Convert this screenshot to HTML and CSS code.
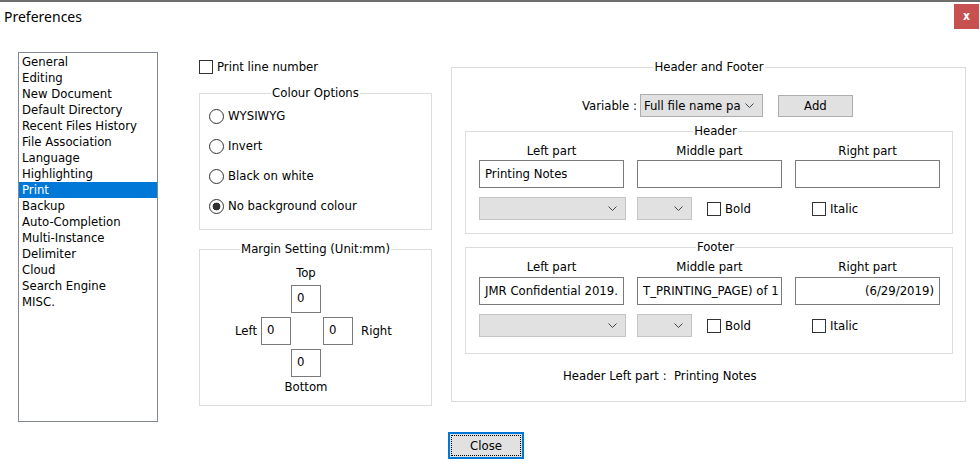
FILE: index.html
```html
<!DOCTYPE html>
<html lang="en">
<head>
<meta charset="utf-8">
<title>Preferences</title>
<link rel="stylesheet" href="styles.css">
</head>
<body>
<div class="topline"></div>
<div class="titlebar">
  <span class="title">Preferences</span>
  <span class="closex">x</span>
</div>
<div class="main">
  <ul class="catlist">
    <li>General</li>
    <li>Editing</li>
    <li>New Document</li>
    <li>Default Directory</li>
    <li>Recent Files History</li>
    <li>File Association</li>
    <li>Language</li>
    <li>Highlighting</li>
    <li class="sel">Print</li>
    <li>Backup</li>
    <li>Auto-Completion</li>
    <li>Multi-Instance</li>
    <li>Delimiter</li>
    <li>Cloud</li>
    <li>Search Engine</li>
    <li>MISC.</li>
  </ul>
  <div class="midcol">
    <label class="chk"><span class="cbox"></span>Print line number</label>
    <fieldset class="grp colour">
      <legend>Colour Options</legend>
      <div class="radios">
        <label class="radio"><span class="rdot"></span>WYSIWYG</label>
        <label class="radio"><span class="rdot"></span>Invert</label>
        <label class="radio"><span class="rdot"></span>Black on white</label>
        <label class="radio"><span class="rdot on"></span>No background colour</label>
      </div>
    </fieldset>
    <fieldset class="grp margins">
      <legend>Margin Setting (Unit:mm)</legend>
      <div class="mgrid">
        <span class="mlabel mtoplabel">Top</span>
        <span class="mbox mtop">0</span>
        <span class="side sleft">Left</span>
        <span class="mbox mleft">0</span>
        <span class="mbox mright">0</span>
        <span class="side sright">Right</span>
        <span class="mbox mbottom">0</span>
        <span class="mlabel mbottomlabel">Bottom</span>
      </div>
    </fieldset>
  </div>
  <fieldset class="grp hf">
    <legend>Header and Footer</legend>
    <div class="varrow">
      <span class="varlabel">Variable :</span>
      <span class="select varsel"><span class="seltext">Full file name pa</span><svg class="chev" width="9" height="5" viewBox="0 0 9 5"><polyline points="0.5,0.5 4.5,4.5 8.5,0.5" fill="none" stroke="#444" stroke-width="1"/></svg></span>
      <span class="btn addbtn">Add</span>
    </div>
    <fieldset class="grp sub headerbox">
      <legend>Header</legend>
      <div class="parts">
        <span class="plabel">Left part</span>
        <span class="plabel">Middle part</span>
        <span class="plabel">Right part</span>
        <span class="pinput">Printing Notes</span>
        <span class="pinput"></span>
        <span class="pinput"></span>
      </div>
      <div class="fontrow">
        <span class="select fontsel"><svg class="chev" width="9" height="5" viewBox="0 0 9 5"><polyline points="0.5,0.5 4.5,4.5 8.5,0.5" fill="none" stroke="#444" stroke-width="1"/></svg></span>
        <span class="select sizesel"><svg class="chev" width="9" height="5" viewBox="0 0 9 5"><polyline points="0.5,0.5 4.5,4.5 8.5,0.5" fill="none" stroke="#444" stroke-width="1"/></svg></span>
        <label class="chk bold"><span class="cbox"></span>Bold</label>
        <label class="chk"><span class="cbox"></span>Italic</label>
      </div>
    </fieldset>
    <fieldset class="grp sub footerbox">
      <legend>Footer</legend>
      <div class="parts">
        <span class="plabel">Left part</span>
        <span class="plabel">Middle part</span>
        <span class="plabel">Right part</span>
        <span class="pinput">JMR Confidential 2019.</span>
        <span class="pinput">T_PRINTING_PAGE) of 1</span>
        <span class="pinput alignright">(6/29/2019)</span>
      </div>
      <div class="fontrow">
        <span class="select fontsel"><svg class="chev" width="9" height="5" viewBox="0 0 9 5"><polyline points="0.5,0.5 4.5,4.5 8.5,0.5" fill="none" stroke="#444" stroke-width="1"/></svg></span>
        <span class="select sizesel"><svg class="chev" width="9" height="5" viewBox="0 0 9 5"><polyline points="0.5,0.5 4.5,4.5 8.5,0.5" fill="none" stroke="#444" stroke-width="1"/></svg></span>
        <label class="chk bold"><span class="cbox"></span>Bold</label>
        <label class="chk"><span class="cbox"></span>Italic</label>
      </div>
    </fieldset>
    <div class="preview">Header Left part :  Printing Notes</div>
  </fieldset>
</div>
<div class="bottombar">
  <button class="closebtn"><span class="focus">Close</span></button>
</div>
</body>
</html>
```
FILE: styles.css
```css
* { box-sizing: border-box; }
html, body { margin: 0; padding: 0; background: #fff; }
body {
  width: 980px;
  height: 472px;
  overflow: hidden;
  font-family: "DejaVu Sans Condensed", "DejaVu Sans", sans-serif;
  font-stretch: condensed;
  font-size: 13px;
  line-height: 16px;
  color: #000;
}
.topline { height: 2px; background: #6e6e6e; }
.titlebar {
  height: 28px;
  display: flex;
  align-items: center;
  justify-content: space-between;
}
.title {
  font-family: "Noto Sans", sans-serif;
  font-stretch: normal;
  font-size: 14px;
  padding-left: 4px;
  padding-top: 1px;
}
.closex {
  width: 25px;
  height: 25px;
  margin-right: 1px;
  background: #c75050;
  color: #fff;
  display: flex;
  align-items: center;
  justify-content: center;
  font-family: "DejaVu Sans", sans-serif;
  font-weight: bold;
  font-size: 12px;
}
.main {
  display: flex;
  align-items: flex-start;
  padding: 22px 0 0 18px;
}
.catlist {
  list-style: none;
  margin: 0;
  padding: 1px 0 0;
  width: 140px;
  height: 370px;
  border: 1px solid #828790;
}
.catlist li { height: 16px; padding-left: 3px; white-space: nowrap; }
.catlist li.sel { background: #0078d7; color: #fff; }

.midcol {
  margin-left: 41px;
  width: 233px;
  padding-top: 7px;
  display: flex;
  flex-direction: column;
}
.chk { display: flex; align-items: center; gap: 4px; height: 16px; white-space: nowrap; }
.cbox { width: 14px; height: 14px; border: 1px solid #333; background: #fff; flex: none; }

.grp {
  margin: 0;
  padding: 0;
  min-width: 0;
  border: 1px solid #dcdcdc;
}
.grp > legend {
  margin: 0 auto;
  padding: 0 1px;
  line-height: 16px;
}
.colour { margin-top: 10px; }
.radios {
  display: flex;
  flex-direction: column;
  gap: 14px;
  padding: 7px 0 15px 9px;
}
.radio { display: flex; align-items: center; gap: 4px; height: 16px; }
.rdot {
  width: 15px;
  height: 15px;
  border: 1px solid #333;
  border-radius: 50%;
  background: #fff;
  flex: none;
}
.rdot.on { background: radial-gradient(circle, #333 0 3.6px, #fff 4.2px); }

.margins { margin-top: 11px; }
.mgrid {
  display: grid;
  grid-template-columns: 61px 30px 30px 32px auto;
  grid-template-rows: 16px 28px 28px 28px 16px;
  row-gap: 4px;
  padding: 8px 0 8px 0;
}
.mbox {
  width: 30px;
  height: 28px;
  border: 1px solid #7a7a7a;
  padding: 4px 0 0 5px;
}
.mlabel { display: flex; justify-content: center; white-space: nowrap; }
.mtoplabel { grid-row: 1; grid-column: 3; }
.mtop { grid-row: 2; grid-column: 3; }
.sleft { grid-row: 3; grid-column: 1; justify-self: end; align-self: center; padding-right: 4px; }
.mleft { grid-row: 3; grid-column: 2; }
.mright { grid-row: 3; grid-column: 4; justify-self: end; }
.sright { grid-row: 3; grid-column: 5; align-self: center; padding-left: 8px; }
.mbottom { grid-row: 4; grid-column: 3; }
.mbottomlabel { grid-row: 5; grid-column: 3; margin-top: -2px; }

.hf {
  margin-left: 19px;
  margin-top: 7px;
  width: 515px;
  padding: 0 12px 17px 13px;
}
.varrow {
  display: flex;
  align-items: center;
  height: 23px;
  margin-top: 19px;
  padding-left: 117px;
}
.select {
  display: flex;
  align-items: center;
  height: 23px;
  background: #e1e1e1;
  border: 1px solid #adadad;
}
.fontrow .select { border-color: #c4c4c4; }
.chev { margin-left: auto; margin-right: 8px; flex: none; }
.varsel { margin-left: 3px; width: 123px; }
.seltext { padding-left: 3px; white-space: nowrap; }
.btn {
  display: flex;
  align-items: center;
  justify-content: center;
  background: #e1e1e1;
  border: 1px solid #adadad;
}
.addbtn { margin-left: 15px; width: 75px; height: 22px; }

.sub { padding: 4px 0 13px 13px; }
.headerbox { margin-top: 6px; }
.footerbox { margin-top: 5px; padding-bottom: 16px; }
.parts {
  display: grid;
  grid-template-columns: 145px 145px 145px;
  column-gap: 13px;
  row-gap: 1px;
}
.footerbox .parts { row-gap: 2px; }
.plabel { text-align: center; }
.pinput {
  height: 28px;
  border: 1px solid #7a7a7a;
  padding: 5px 5px 0;
  white-space: nowrap;
  overflow: hidden;
}
.alignright { text-align: right; }
.fontrow {
  display: flex;
  align-items: center;
  height: 23px;
  margin-top: 9px;
}
.fontsel { width: 147px; }
.sizesel { width: 55px; margin-left: 11px; }
.bold { margin-left: 15px; width: 105px; }

.preview { margin-top: 14px; padding-left: 98px; white-space: pre; }

.bottombar { padding: 10px 0 0 448px; }
.closebtn {
  width: 76px;
  height: 27px;
  border: 2px solid #0078d7;
  background: #e1e1e1;
  padding: 1px;
  margin: 0;
  font: inherit;
  color: #000;
  display: block;
}
.closebtn .focus {
  display: flex;
  align-items: center;
  justify-content: center;
  height: 100%;
  border: 1px dotted #000;
}
```
